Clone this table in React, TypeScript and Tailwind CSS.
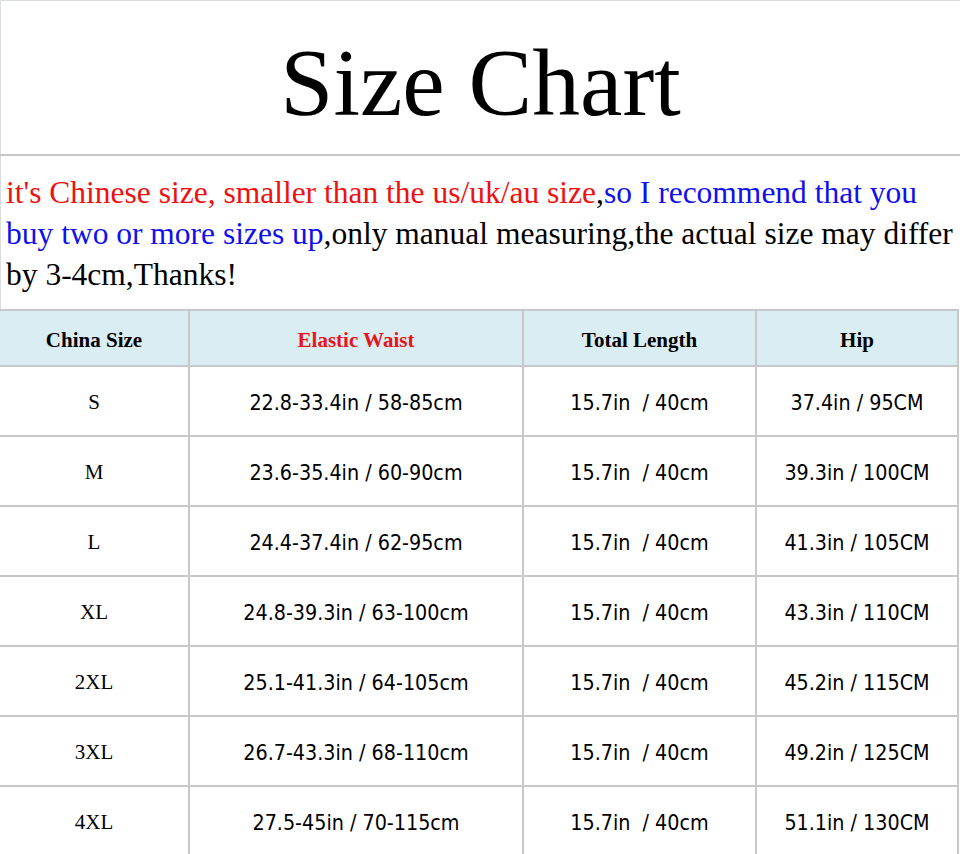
import React from "react";

const rows: [string, string, string, string][] = [
  ["S", "22.8-33.4in / 58-85cm", "15.7in  / 40cm", "37.4in / 95CM"],
  ["M", "23.6-35.4in / 60-90cm", "15.7in  / 40cm", "39.3in / 100CM"],
  ["L", "24.4-37.4in / 62-95cm", "15.7in  / 40cm", "41.3in / 105CM"],
  ["XL", "24.8-39.3in / 63-100cm", "15.7in  / 40cm", "43.3in / 110CM"],
  ["2XL", "25.1-41.3in / 64-105cm", "15.7in  / 40cm", "45.2in / 115CM"],
  ["3XL", "26.7-43.3in / 68-110cm", "15.7in  / 40cm", "49.2in / 125CM"],
  ["4XL", "27.5-45in / 70-115cm", "15.7in  / 40cm", "51.1in / 130CM"],
];

const serif = "font-['Liberation_Serif','Times_New_Roman',serif]";
const sans = "font-['DejaVu_Sans_Condensed','DejaVu_Sans',sans-serif]";

export default function App() {
  return (
    <div className="w-[960px] h-[854px] overflow-hidden bg-white text-black">
      <div className="border-t border-l border-[#d9dce1] h-[154px] pt-[35px] text-center">
        <div className={`${serif} text-[95.5px] leading-[95px]`}>Size Chart</div>
      </div>
      <div className="h-[2px] bg-[#c6c6c6]" />
      <div
        className={`${serif} border-l border-[#d9dce1] h-[153px] pt-[16px] pl-[5px] text-[31.5px] leading-[41px] whitespace-nowrap`}
      >
        <span className="text-[#f01010]">
          it's Chinese size, smaller than the us/uk/au size
        </span>
        <span>,</span>
        <span className="text-[#1010ee]">so I recommend that you</span>
        <br />
        <span className="text-[#1010ee]">buy two or more sizes up</span>
        <span>,only manual measuring,the actual size may differ</span>
        <br />
        <span>by 3-4cm,Thanks!</span>
      </div>
      <div className="w-[959px] bg-[#c8c8c8] pt-[2px] pr-[2px] grid grid-cols-[188px_332px_231px_200px] grid-rows-[54px_repeat(7,68px)] gap-[2px]">
        <div className={`${serif} bg-[#daedf3] flex items-center justify-center pt-[5px] font-bold text-[21px]`}>
          China Size
        </div>
        <div className={`${serif} bg-[#daedf3] flex items-center justify-center pt-[5px] font-bold text-[21px] text-[#e8141b]`}>
          Elastic Waist
        </div>
        <div className={`${serif} bg-[#daedf3] flex items-center justify-center pt-[5px] font-bold text-[21px]`}>
          Total Length
        </div>
        <div className={`${serif} bg-[#daedf3] flex items-center justify-center pt-[5px] font-bold text-[21px]`}>
          Hip
        </div>
        {rows.map((r) => (
          <React.Fragment key={r[0]}>
            <div className={`${serif} bg-white flex items-center justify-center pt-[3px] text-[21px]`}>
              {r[0]}
            </div>
            <div className={`${sans} bg-white flex items-center justify-center pt-[3px] text-[21.3px] whitespace-pre`}>
              {r[1]}
            </div>
            <div className={`${sans} bg-white flex items-center justify-center pt-[3px] text-[21.3px] whitespace-pre`}>
              {r[2]}
            </div>
            <div className={`${sans} bg-white flex items-center justify-center pt-[3px] text-[21.3px] whitespace-pre`}>
              {r[3]}
            </div>
          </React.Fragment>
        ))}
      </div>
    </div>
  );
}
